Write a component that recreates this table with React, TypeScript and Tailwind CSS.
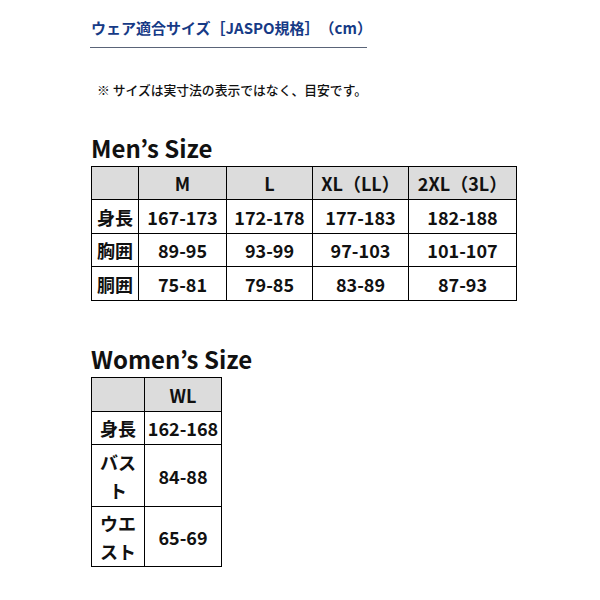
import React from 'react';

const menCols = ['M', 'L', 'XL（LL）', '2XL（3L）'];
const menWidths = ['w-[47px]', 'w-[88px]', 'w-[86px]', 'w-[96px]', 'w-[108px]'];
const menRows = [
  { label: '身長', values: ['167-173', '172-178', '177-183', '182-188'], h: 'h-[34px]' },
  { label: '胸囲', values: ['89-95', '93-99', '97-103', '101-107'], h: 'h-[33px]' },
  { label: '胴囲', values: ['75-81', '79-85', '83-89', '87-93'], h: 'h-[34px]' },
];

const cell = 'border border-black text-center align-middle p-0';

const App: React.FC = () => {
  return (
    <div
      className="w-[600px] h-[600px] bg-white text-[#111] pl-[91px] pt-[17px] [text-spacing-trim:space-all]"
      style={{ fontFamily: '"Noto Sans CJK JP", "Noto Sans", sans-serif' }}
    >
      {/* 見出し */}
      <div className="w-[277px] border-b border-[#5a6478] pb-[8px] -ml-[1px]">
        <h1 className="text-[15px] leading-[22px] font-bold text-[#163a86] pl-[1px] whitespace-nowrap">
          ウェア適合サイズ［JASPO規格］（cm）
        </h1>
      </div>

      <p className="mt-[33px] ml-[6px] text-[12.8px] leading-[18px] font-medium whitespace-nowrap">
        ※ サイズは実寸法の表示ではなく、目安です。
      </p>

      {/* Men's */}
      <h2 className="mt-[34px] text-[24px] leading-[30px] font-bold">Men’s Size</h2>
      <table className="mt-[3px] border-collapse text-[18px] font-bold leading-none">
        <tbody>
          <tr className="h-[33px] bg-[#dcdcdc]">
            <td className={`${cell} ${menWidths[0]}`}></td>
            {menCols.map((c, i) => (
              <td key={c} className={`${cell} ${menWidths[i + 1]}`}>{c}</td>
            ))}
          </tr>
          {menRows.map(r => (
            <tr key={r.label} className={r.h}>
              <td className={cell}>{r.label}</td>
              {r.values.map((v, i) => (
                <td key={i} className={cell}>{v}</td>
              ))}
            </tr>
          ))}
        </tbody>
      </table>

      {/* Women's */}
      <h2 className="mt-[43px] text-[24px] leading-[30px] font-bold">Women’s Size</h2>
      <table className="mt-[3px] border-collapse text-[18px] font-bold">
        <tbody>
          <tr className="h-[34px] bg-[#dcdcdc]">
            <td className={`${cell} w-[53px]`}></td>
            <td className={`${cell} w-[77px] leading-none`}>WL</td>
          </tr>
          <tr className="h-[33px]">
            <td className={`${cell} leading-none`}>身長</td>
            <td className={`${cell} leading-none`}>162-168</td>
          </tr>
          <tr className="h-[62px]">
            <td className={`${cell} leading-[28px]`}>バス<br />ト</td>
            <td className={`${cell} leading-none`}>84-88</td>
          </tr>
          <tr className="h-[60px]">
            <td className={`${cell} leading-[28px]`}>ウエ<br />スト</td>
            <td className={`${cell} leading-none`}>65-69</td>
          </tr>
        </tbody>
      </table>
    </div>
  );
};

export default App;
